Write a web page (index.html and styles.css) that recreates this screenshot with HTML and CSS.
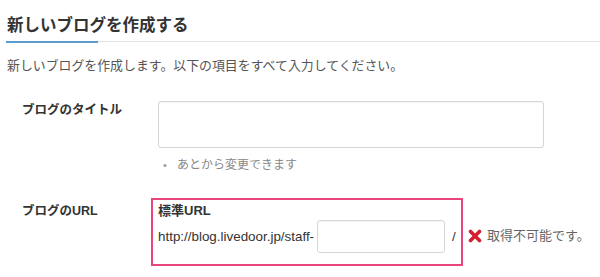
FILE: index.html
```html
<!DOCTYPE html>
<html lang="ja">
<head>
<meta charset="utf-8">
<title>新しいブログを作成する</title>
<link rel="stylesheet" href="styles.css">
</head>
<body>
<div class="page">
  <div class="heading">
    <h1 class="heading-title">新しいブログを作成する</h1>
    <div class="rule"><div class="rule-accent"></div><div class="rule-rest"></div></div>
  </div>
  <p class="lead">新しいブログを作成します。以下の項目をすべて入力してください。</p>
  <div class="form">
    <div class="row">
      <div class="label">ブログのタイトル</div>
      <div class="field">
        <input class="text-input title-input" type="text">
        <ul class="hint">
          <li class="hint-item"><span class="bullet">•</span>あとから変更できます</li>
        </ul>
      </div>
    </div>
    <div class="row row-url">
      <div class="label label-url">ブログのURL</div>
      <div class="field field-url">
        <div class="url-box">
          <div class="url-title">標準URL</div>
          <div class="url-line">
            <span class="url-prefix">http://blog.livedoor.jp/staff-</span>
            <input class="text-input url-input" type="text">
            <span class="url-slash">/</span>
          </div>
        </div>
        <div class="error">
          <svg class="error-icon" width="14" height="14" viewBox="0 0 14 14" aria-hidden="true">
            <path d="M2.5 2.5 L11.5 11.5 M11.5 2.5 L2.5 11.5" stroke="#d3202f" stroke-width="3.6" stroke-linecap="round" fill="none"/>
          </svg>
          <span class="error-text">取得不可能です。</span>
        </div>
      </div>
    </div>
  </div>
</div>
</body>
</html>
```
FILE: styles.css
```css
html, body {
  margin: 0;
  padding: 0;
  background: #fff;
}
body {
  font-family: "Liberation Sans", "Noto Sans CJK JP", sans-serif;
  color: #333;
  width: 600px;
  height: 277px;
  overflow: hidden;
}
.page {
  padding-top: 13px;
}
.heading {
  margin-left: 6px;
}
.heading-title {
  margin: 0 0 4px 1px;
  font-size: 16.5px;
  line-height: 24px;
  font-weight: bold;
  color: #333;
}
.rule {
  display: flex;
  align-items: flex-start;
  height: 2px;
}
.rule-accent {
  width: 92px;
  height: 2px;
  background: #5a9bd0;
}
.rule-rest {
  flex: 1;
  height: 1px;
  background: #e2e2e2;
}
.lead {
  margin: 13px 0 0 7px;
  font-size: 12.9px;
  line-height: 20px;
  color: #555;
}
.form {
  margin-top: 25px;
  padding-left: 22px;
}
.row {
  display: flex;
  align-items: flex-start;
}
.label {
  width: 136px;
  flex: none;
  font-size: 12.5px;
  line-height: 18px;
  font-weight: bold;
  color: #333;
}
.field {
  flex: none;
}
.text-input {
  display: block;
  box-sizing: border-box;
  margin: 0;
  border: 1px solid #d6d6d6;
  border-radius: 3px;
  background: #fff;
  box-shadow: inset 0 1px 1px rgba(0,0,0,0.04);
  font: inherit;
  outline: none;
}
.title-input {
  width: 386px;
  height: 47px;
}
.hint {
  list-style: none;
  margin: 8px 0 0 0;
  padding: 0;
}
.hint-item {
  display: flex;
  font-size: 12px;
  line-height: 18px;
  color: #888;
}
.bullet {
  width: 19px;
  padding-left: 5px;
  box-sizing: border-box;
  font-size: 11px;
  color: #999;
}
.row-url {
  margin-top: 24px;
}
.label-url {
  padding-top: 4px;
}
.field-url {
  display: flex;
  align-items: flex-start;
}
.url-box {
  box-sizing: border-box;
  width: 312px;
  height: 68px;
  margin-left: -7px;
  border: 2px solid #e8457e;
  padding: 2px 5px 0 5px;
}
.url-title {
  font-size: 13px;
  line-height: 18px;
  font-weight: bold;
  color: #333;
}
.url-line {
  display: flex;
  align-items: center;
  height: 33px;
  font-size: 13.4px;
  color: #333;
}
.url-prefix {
  white-space: nowrap;
}
.url-input {
  width: 128px;
  height: 33px;
  margin-left: 3px;
}
.url-slash {
  margin-left: 7px;
}
.error {
  display: flex;
  align-items: center;
  margin: 29px 0 0 5px;
}
.error-icon {
  display: block;
  flex: none;
}
.error-text {
  margin-left: 5px;
  font-size: 13px;
  line-height: 18px;
  color: #666;
}
```
